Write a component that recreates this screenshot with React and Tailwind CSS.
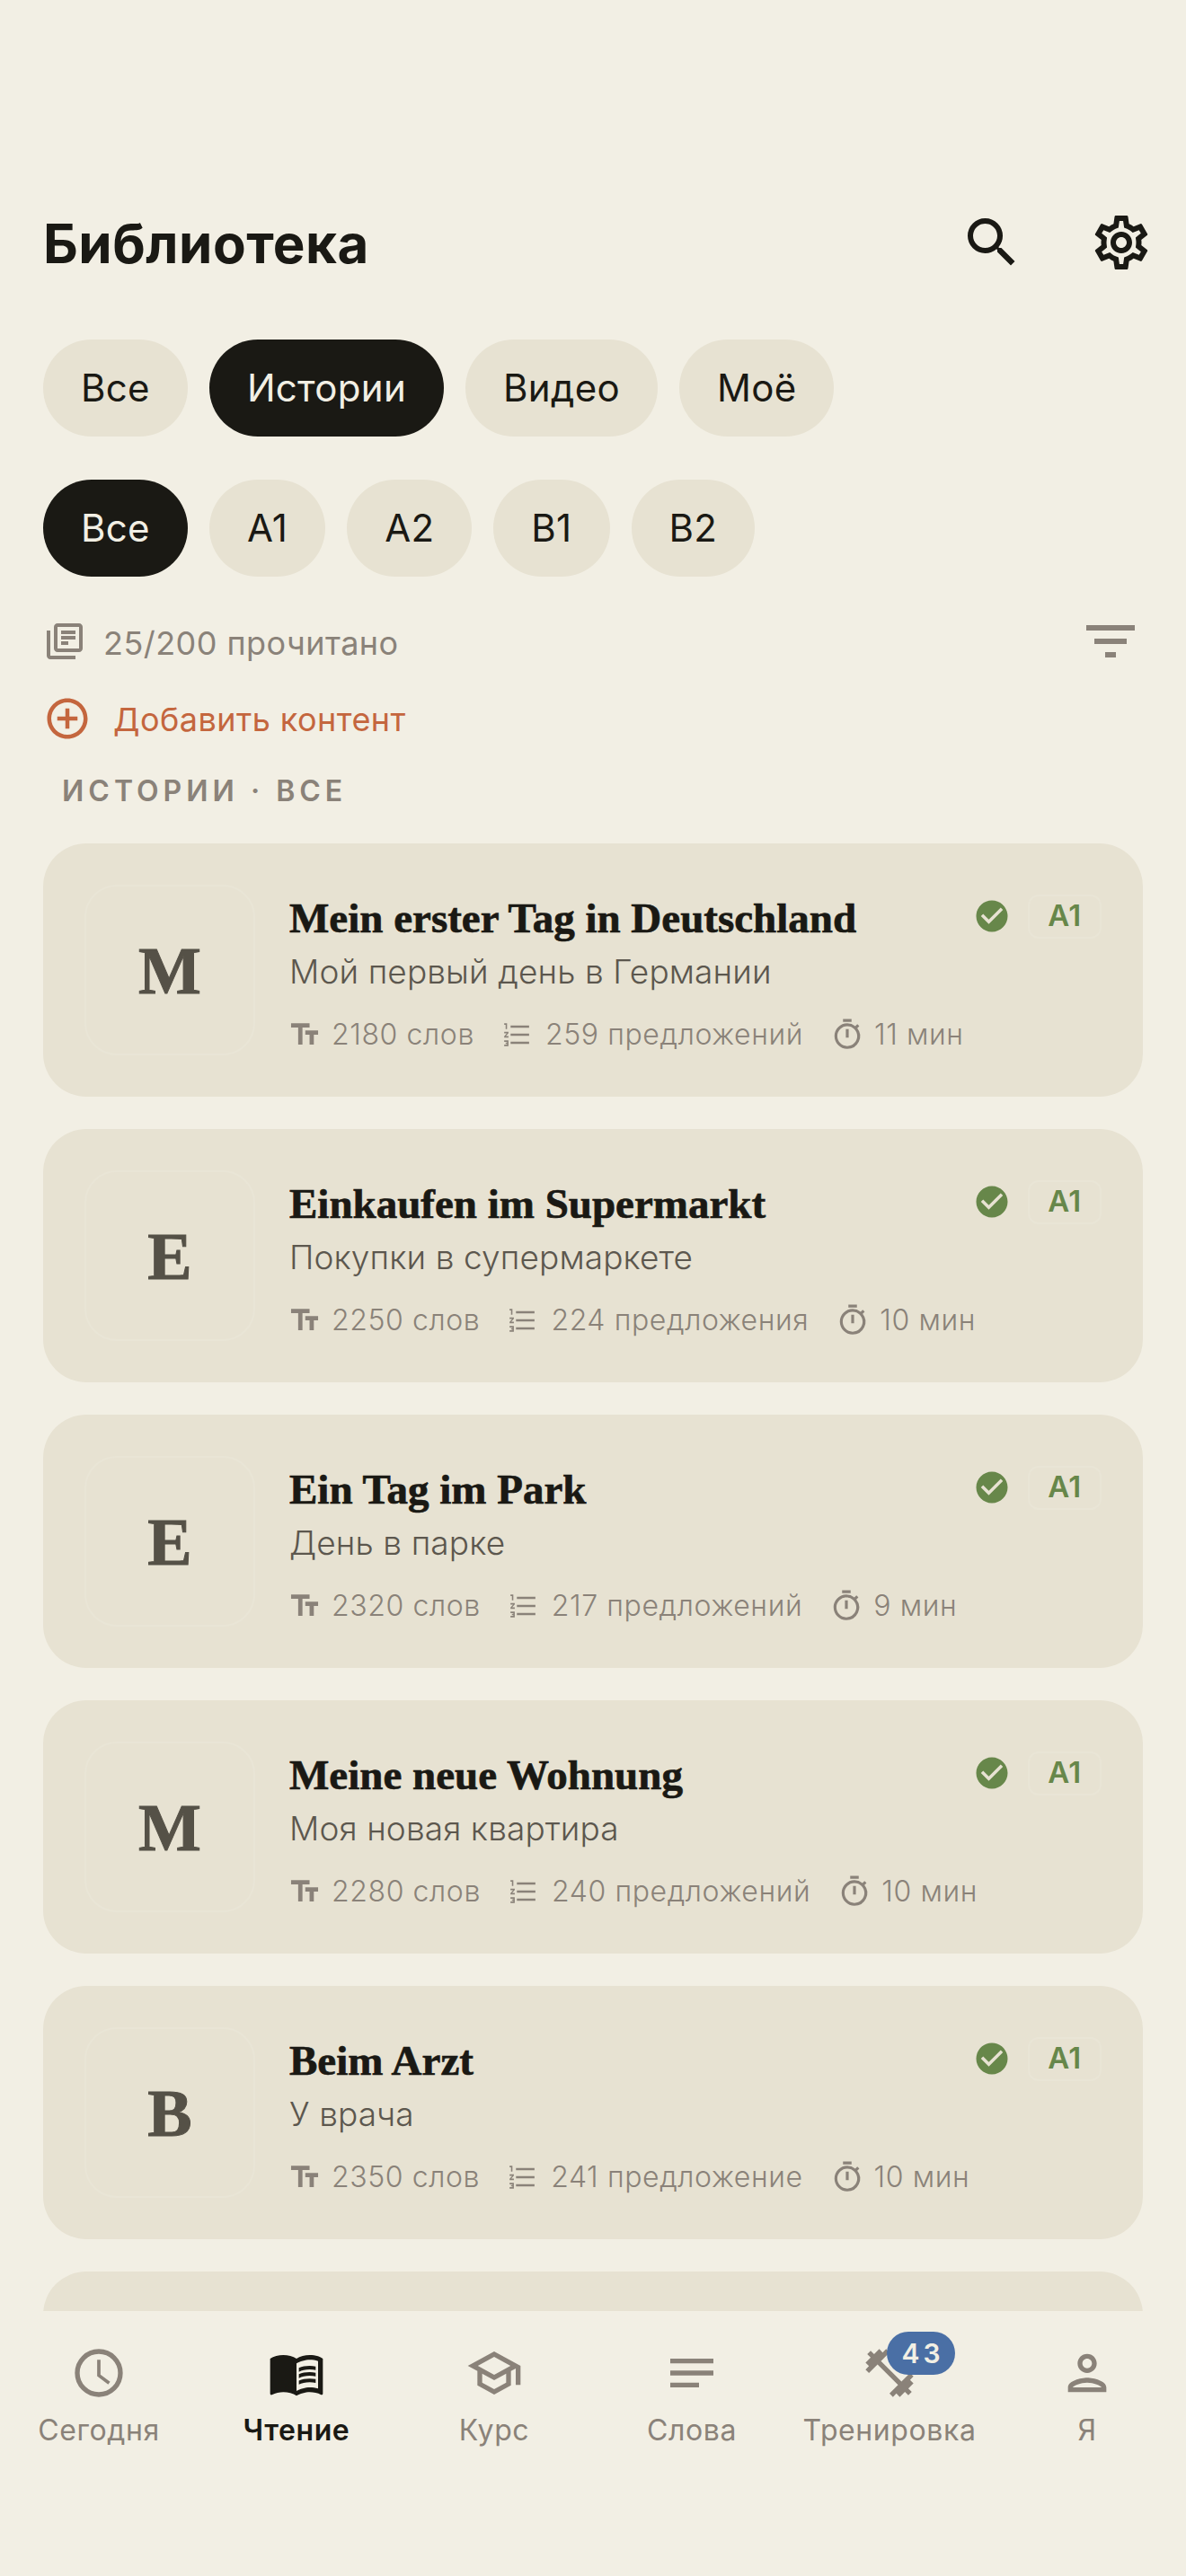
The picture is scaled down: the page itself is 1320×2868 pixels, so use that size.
import React from 'react';
import {
  MdSearch, MdOutlineSettings, MdOutlineLibraryBooks, MdFilterList, MdAddCircleOutline,
  MdCheckCircle, MdTextFields, MdOutlineTimer,
  MdMenuBook, MdOutlineSchool, MdNotes, MdFitnessCenter, MdOutlinePerson,
} from 'react-icons/md';

const stories = [
  { letter: 'M', title: 'Mein erster Tag in Deutschland', sub: 'Мой первый день в Германии', words: '2180 слов', sentences: '259 предложений', time: '11 мин' },
  { letter: 'E', title: 'Einkaufen im Supermarkt', sub: 'Покупки в супермаркете', words: '2250 слов', sentences: '224 предложения', time: '10 мин' },
  { letter: 'E', title: 'Ein Tag im Park', sub: 'День в парке', words: '2320 слов', sentences: '217 предложений', time: '9 мин' },
  { letter: 'M', title: 'Meine neue Wohnung', sub: 'Моя новая квартира', words: '2280 слов', sentences: '240 предложений', time: '10 мин' },
  { letter: 'B', title: 'Beim Arzt', sub: 'У врача', words: '2350 слов', sentences: '241 предложение', time: '10 мин' },
];

// thinner lines than the stock format_list_numbered
const NumberedList = ({ size }) => (
  <svg width={size} height={size} viewBox="0 0 24 24" fill="currentColor">
    <path d="M2 17h2v.5H3v1h1v.5H2v1h3v-4H2v1zm1-9h1V4H2v1h1v3zm-1 3h1.8L2 13.1v.9h3v-1H3.2L5 10.9V10H2v1z" />
    <path d="M6.5 5.5h13v1.6h-13zM6.5 11.2h13v1.6h-13zM6.5 16.9h13v1.6h-13z" />
  </svg>
);

// clock with thin hands
const Clock = ({ size }) => (
  <svg width={size} height={size} viewBox="0 0 24 24" fill="none" stroke="currentColor">
    <circle cx="12" cy="12" r="9" strokeWidth="2" />
    <path d="M12 6.5V13l4.3 3.2" strokeWidth="1.4" />
  </svg>
);

const Pill = ({ label, active }) => (
  <button className={`h-[108px] px-[42px] rounded-full text-[42px] tracking-[0.3px] leading-none ${active ? 'bg-[#1a1914] text-[#f2efe4]' : 'bg-[#e7e2d2] text-[#1a1914]'}`}>
    {label}
  </button>
);

const Meta = ({ icon: Icon, text }) => (
  <div className="flex items-center gap-[11px]">
    <Icon size={38} />
    <span>{text}</span>
  </div>
);

const StoryCard = ({ story }) => (
  <div className="h-[282px] shrink-0 rounded-[48px] bg-[#e7e2d2] p-[46px] flex">
    <div className="w-[190px] h-[190px] shrink-0 rounded-[36px] border-2 border-[#e9e5d6] flex items-center justify-center font-['Liberation_Serif',serif] font-bold text-[74px] leading-none text-[#555147] [-webkit-text-stroke:1px_#555147]">
      <span className="pt-[2px]">{story.letter}</span>
    </div>
    <div className="flex-1 min-w-0 ml-[38px] pt-[10px]">
      <div className="flex items-center justify-between h-[50px]">
        <h3 className="pt-[4px] font-['Liberation_Serif',serif] font-bold text-[47px] leading-none text-[#1a1914] [-webkit-text-stroke:0.7px_#1a1914]">{story.title}</h3>
        <div className="flex items-center gap-[19px]">
          <MdCheckCircle size={42} className="text-[#67874a]" />
          <span className="w-[82px] h-[49px] rounded-[12px] border-2 border-[#e9e5d6] flex items-center justify-center text-[33px] tracking-[0.5px] font-semibold text-[#67874a]">A1</span>
        </div>
      </div>
      <p className="mt-[15px] h-[44px] leading-[44px] text-[37px] tracking-[0.1px] font-light text-[#5c574e]">{story.sub}</p>
      <div className="mt-[28px] h-[40px] -ml-[2px] flex items-center gap-[30px] text-[32px] tracking-[0.6px] font-light text-[#8a8279]">
        <Meta icon={MdTextFields} text={story.words} />
        <Meta icon={NumberedList} text={story.sentences} />
        <Meta icon={MdOutlineTimer} text={story.time} />
      </div>
    </div>
  </div>
);

const tabs = [
  { label: 'Сегодня', icon: Clock },
  { label: 'Чтение', icon: MdMenuBook, active: true },
  { label: 'Курс', icon: MdOutlineSchool },
  { label: 'Слова', icon: MdNotes },
  { label: 'Тренировка', icon: MdFitnessCenter, badge: '43' },
  { label: 'Я', icon: MdOutlinePerson },
];

const App = () => {
  return (
    <div className="h-[2868px] w-full overflow-hidden flex flex-col bg-[#f2efe4] font-['Inter',sans-serif] text-[#1a1914]">
      <div className="flex-1 min-h-0 overflow-hidden pt-[234px] flex flex-col">
        <div className="flex items-center justify-between h-[72px] pl-[48px] pr-[36px]">
          <h1 className="pt-[2px] text-[60px] font-bold tracking-[0.5px] leading-none">Библиотека</h1>
          <div className="flex gap-[72px]">
            <MdSearch size={72} />
            <MdOutlineSettings size={72} />
          </div>
        </div>

        <div className="flex gap-[24px] px-[48px] mt-[72px]">
          <Pill label="Все" />
          <Pill label="Истории" active />
          <Pill label="Видео" />
          <Pill label="Моё" />
        </div>
        <div className="flex gap-[24px] px-[48px] mt-[48px]">
          <Pill label="Все" active />
          <Pill label="A1" />
          <Pill label="A2" />
          <Pill label="B1" />
          <Pill label="B2" />
        </div>

        <div className="flex items-center justify-between h-[48px] mt-[48px] pl-[48px] pr-[48px] text-[#8a8279]">
          <div className="flex items-center gap-[19px]">
            <MdOutlineLibraryBooks size={48} />
            <span className="pt-[3px] text-[36px] tracking-[0.45px]">25/200 прочитано</span>
          </div>
          <MdFilterList size={72} />
        </div>

        <div className="flex items-center h-[54px] mt-[35px] pl-[48px] gap-[24px] text-[#c4663e]">
          <MdAddCircleOutline size={54} />
          <span className="pt-[2px] text-[36px] tracking-[0.45px]">Добавить контент</span>
        </div>

        <div className="mt-[34px] pl-[69px] h-[40px] leading-[40px] text-[32px] font-semibold tracking-[5px] text-[#8a8279]">
          ИСТОРИИ · ВСЕ
        </div>

        <div className="mt-[38px] px-[48px] flex flex-col gap-[36px]">
          {stories.map((story) => <StoryCard key={story.title} story={story} />)}
          <div className="h-[282px] shrink-0 rounded-[48px] bg-[#e7e2d2]" />
        </div>
      </div>

      <nav className="h-[295px] shrink-0 grid grid-cols-6 bg-[#f2efe4] pt-[37px]">
        {tabs.map((tab) => (
          <div key={tab.label} className={`flex flex-col items-center ${tab.active ? 'text-[#1a1914]' : 'text-[#8a8279]'}`}>
            <div className="relative h-[64px]">
              <tab.icon size={64} />
              {tab.badge && (
                <span className="absolute left-[29px] -top-[14px] w-[76px] h-[48px] pl-[4px] rounded-full bg-[#4a6fa5] text-[#f2efe4] text-[30px] font-semibold tracking-[4px] flex items-center justify-center">
                  {tab.badge}
                </span>
              )}
            </div>
            <span className={`mt-[12px] text-[32px] tracking-[0.6px] leading-[40px] whitespace-nowrap ${tab.active ? 'font-semibold' : ''}`}>{tab.label}</span>
          </div>
        ))}
      </nav>
    </div>
  );
};

export default App;
